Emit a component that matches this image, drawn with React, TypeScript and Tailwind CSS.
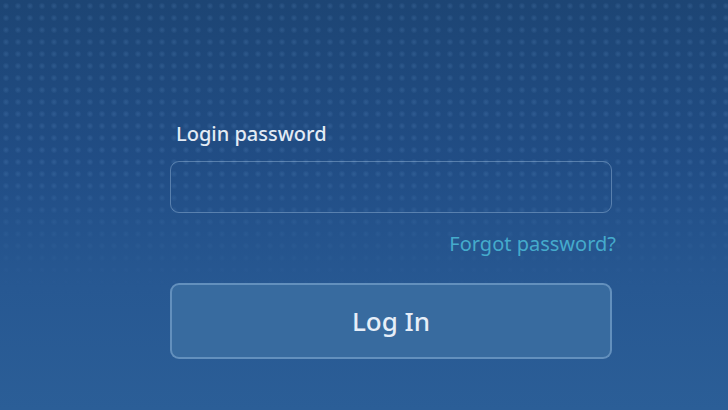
export default function App() {
  return (
    <div className="relative h-[410px] w-[728px] overflow-hidden bg-[linear-gradient(to_bottom,#1d4574_0%,#214d85_40%,#275892_70%,#2b5e97_100%)] font-['Noto_Sans',sans-serif]">
      {/* dotted texture, fades out toward the bottom */}
      <div className="pointer-events-none absolute inset-0 bg-[radial-gradient(circle,rgba(110,160,215,0.2)_0px,rgba(110,160,215,0.1)_2px,transparent_3.5px)] bg-[size:12px_12px] [mask-image:linear-gradient(to_bottom,black_0%,black_40%,transparent_72%)]" />

      <div className="relative flex flex-col pl-[170px] pr-[116px] pt-[119px]">
        <label className="pl-[6px] text-[20px] font-medium leading-[30px] text-[#e3ebf5]">
          Login password
        </label>
        <input
          type="password"
          className="mt-[12px] h-[52px] w-full rounded-[9px] border border-[rgba(170,200,230,0.4)] bg-transparent px-3 text-white outline-none"
        />
        <div className="mt-[16px] flex justify-end">
          <a className="mr-[-4px] text-[20px] leading-[30px] text-[#45abcc]">
            Forgot password?
          </a>
        </div>
        <button className="mt-[24px] h-[76px] w-full rounded-[9px] border-2 border-[rgba(160,195,230,0.42)] bg-[#386b9f] text-[26px] font-medium text-[#e6eef8]">
          Log In
        </button>
      </div>
    </div>
  );
}
